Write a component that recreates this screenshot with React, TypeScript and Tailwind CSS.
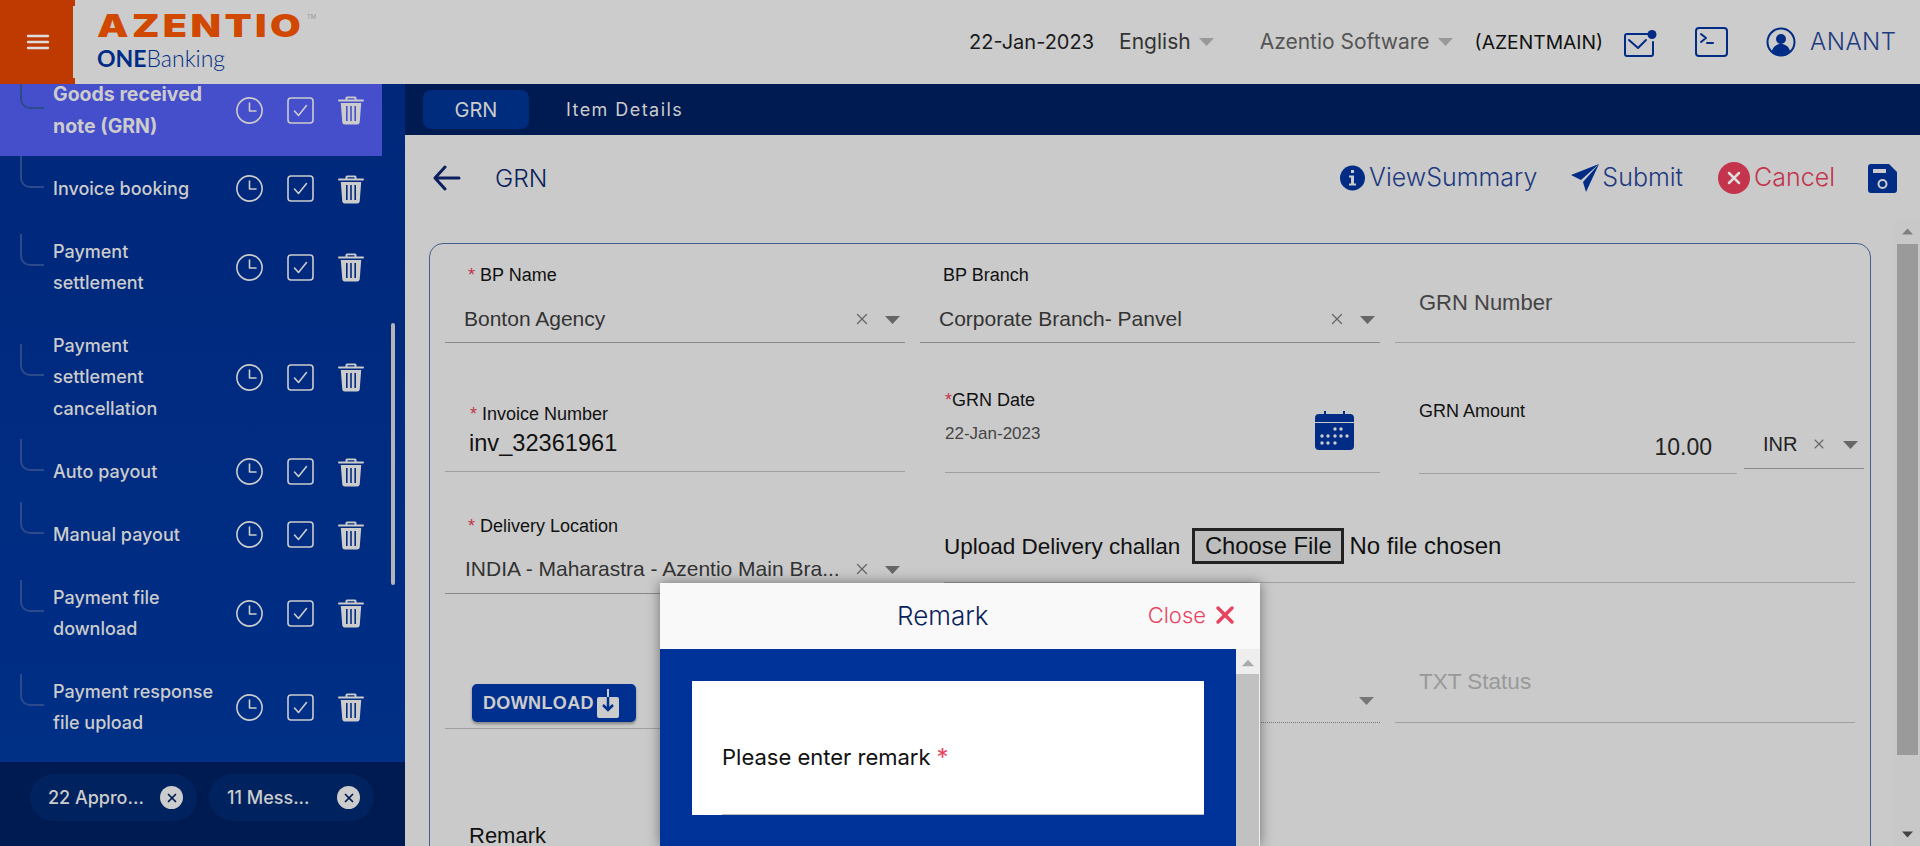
import { ReactNode } from "react";
import { X } from "lucide-react";

const menu = [
  { label: "Goods received note (GRN)", h: "h-[94px]", w: "w-[150px]", active: true },
  { label: "Invoice booking", h: "h-[63px]" },
  { label: "Payment settlement", h: "h-[94px]", w: "w-[150px]" },
  { label: "Payment settlement cancellation", h: "h-[126px]", w: "w-[150px]" },
  { label: "Auto payout", h: "h-[63px]" },
  { label: "Manual payout", h: "h-[63px]" },
  { label: "Payment file download", h: "h-[94px]", w: "w-[150px]" },
  { label: "Payment response file upload", h: "h-[94px]" },
];

function ClockIcon() {
  return (
    <svg width="27" height="27" viewBox="0 0 27 27" fill="none" stroke="#cccccc" strokeWidth="1.6" strokeLinecap="round" strokeLinejoin="round">
      <circle cx="13.5" cy="13.5" r="12.6" />
      <path d="M13.5 6v8h6.5" />
    </svg>
  );
}

function CheckIcon() {
  return (
    <svg width="27" height="27" viewBox="0 0 27 27" fill="none" stroke="#cccccc" strokeWidth="1.6" strokeLinecap="round" strokeLinejoin="round">
      <rect x="1" y="1" width="25" height="25" rx="3" />
      <path d="M7.5 14l4 4.5 8-10" />
    </svg>
  );
}

function TrashIcon() {
  return (
    <svg width="26" height="30" viewBox="0 0 26 30" fill="#cccccc">
      <path d="M9 1.500h8a1.500 1.500 0 0 1 1.500 1.500v1.500H25a1 1 0 0 1 0 2H1a1 1 0 0 1 0-2h6.500V3A1.500 1.500 0 0 1 9 1.500zM9.500 3.200v1.300h7V3.200z" />
      <path fillRule="evenodd" d="M2.800 8h20.400l-1.500 19.500A2.500 2.500 0 0 1 19.200 29.500H6.800a2.500 2.500 0 0 1-2.500-2L2.800 8zM8 11v15h1.600V11zM12.200 11v15h1.600V11zM16.400 11v15H18V11z" />
    </svg>
  );
}

function Caret({ className = "" }: { className?: string }) {
  return (
    <svg width="15" height="8" viewBox="0 0 15 8" className={className}>
      <path d="M0 0h15L7.500 8z" fill="currentColor" />
    </svg>
  );
}

function MenuRow({ label, h, w, active }: { label: string; h: string; w?: string; active?: boolean }) {
  return (
    <div className={`relative flex w-[382px] items-center pl-[53px] ${h} ${active ? "bg-[#464fcb]" : ""}`}>
      <span className="absolute bottom-1/2 left-[20px] h-[32px] w-[24px] rounded-bl-[10px] border-b-2 border-l-2 border-[#2c4a8c]" />
      <div className={`mr-auto shrink-0 pt-[2px] text-[#cccccc] ${active ? "text-[19.5px] font-bold leading-[32px]" : "text-[18px] font-medium leading-[31.5px]"} ${w ?? "w-[183px]"}`}>
        {label}
      </div>
      <div className="absolute left-[236px] top-[calc(50%+1px)] flex -translate-y-1/2 items-center gap-[24px]">
        <ClockIcon />
        <CheckIcon />
        <TrashIcon />
      </div>
    </div>
  );
}

function Chip({ text, className }: { text: string; className: string }) {
  return (
    <div className={`flex h-[47px] items-center rounded-full bg-[#00225f] pl-[18px] ${className}`}>
      <span className="text-[18px] font-medium text-[#cccccc]">{text}</span>
      <span className="ml-auto mr-[14px] flex h-[23px] w-[23px] items-center justify-center rounded-full bg-[#cccccc]">
        <X size={14} strokeWidth={3} className="text-[#001a52]" />
      </span>
    </div>
  );
}

function Label({ text, star, className = "" }: { text: string; star?: boolean; className?: string }) {
  return (
    <div className={`text-[18px] leading-[20px] text-[#111111] ${className}`}>
      {star && <span className="mr-[5px] text-[#c0354a]">*</span>}
      {text}
    </div>
  );
}

function SelectValue({ children }: { children: ReactNode }) {
  return (
    <div className="flex items-center text-[21px] leading-[28px] text-[#333333]">
      <span className="min-w-0 flex-1 truncate">{children}</span>
      <X size={18} strokeWidth={1.6} className="ml-[4px] mr-[14px] shrink-0 text-[#666666]" />
      <Caret className="mr-[5px] mt-[2px] shrink-0 text-[#666666]" />
    </div>
  );
}

export default function App() {
  return (
    <div className="relative flex h-[846px] w-[1920px] flex-col overflow-hidden bg-[#cacaca] font-['Inter',sans-serif]">
      <header className="flex h-[84px] shrink-0 items-center bg-[#cccccc]">
        <div className="flex h-full w-[75px] shrink-0 items-center justify-center bg-[#bf3a00]">
          <svg width="24" height="16" viewBox="0 0 24 16" stroke="#dddddd" strokeWidth="2.4" strokeLinecap="round">
            <path d="M2 2h20M2 8h20M2 14h20" />
          </svg>
        </div>
        <div className="-ml-[2px] flex h-[72px] w-[100px] shrink-0 flex-col bg-[#cccccc] pl-[24px] pt-[2px]">
          <div className="relative">
            <span className="inline-block origin-left scale-x-[1.28] text-[31px] font-black leading-[36px] tracking-[0.085em] text-[#d14800]">AZENTIO</span>
            <span className="absolute left-[210px] top-[4px] text-[6px] text-[#999999]">TM</span>
          </div>
          <div className="-mt-[1px] whitespace-nowrap text-[23px] leading-[30px] text-[#002c85] [font-family:'Lato',sans-serif]">
            <span className="font-bold">ONE</span>
            <span className="font-light">Banking</span>
          </div>
        </div>

        <span className="ml-[796px] text-[20px] text-[#1a1a1a]">22-Jan-2023</span>
        <span className="ml-[25px] text-[21px] text-[#333333]">English</span>
        <Caret className="ml-[8px] text-[#999999]" />
        <span className="ml-[46px] text-[21px] text-[#555555]">Azentio Software</span>
        <Caret className="ml-[8px] text-[#999999]" />
        <span className="ml-[22px] text-[19.3px] text-[#111111]">(AZENTMAIN)</span>
        <svg width="33" height="27" viewBox="0 0 33 27" fill="none" className="ml-[21px] mt-[3px]" stroke="#002c85" strokeWidth="2" strokeLinecap="round" strokeLinejoin="round">
          <path d="M25 4H3a2 2 0 0 0-2 2v18a2 2 0 0 0 2 2h24a2 2 0 0 0 2-2V12" />
          <path d="M5 10l9 8 8-8" />
          <circle cx="28" cy="4.500" r="4.500" fill="#002c85" stroke="none" />
        </svg>
        <svg width="33" height="30" viewBox="0 0 33 30" fill="none" className="ml-[38px]" stroke="#002c85" strokeWidth="2" strokeLinecap="round" strokeLinejoin="round">
          <rect x="1" y="1" width="31" height="28" rx="3" />
          <path d="M6 7l5 4-5 4M12 16h6" />
        </svg>
        <svg width="30" height="30" viewBox="0 0 30 30" className="ml-[38px]">
          <circle cx="15" cy="15" r="13.500" fill="none" stroke="#002c85" strokeWidth="2" />
          <circle cx="15" cy="12" r="5" fill="#002c85" />
          <path d="M6 24c1.500-5 5-7 9-7s7.500 2 9 7c-2.500 2.500-5.500 4-9 4s-6.500-1.500-9-4z" fill="#002c85" />
        </svg>
        <span className="ml-[14px] text-[24px] font-light tracking-[0.02em] text-[#1e3a80]">ANANT</span>
      </header>

      <div className="flex min-h-0 flex-1">
        <aside className="relative flex w-[405px] shrink-0 flex-col overflow-hidden bg-gradient-to-b from-[#00277a] to-[#003088]">
          <div className="-mt-[22px] min-h-0 flex-1">
            {menu.map((m) => (
              <MenuRow key={m.label} {...m} />
            ))}
          </div>
          <span className="absolute left-[391px] top-[239px] h-[262px] w-[4px] rounded-full bg-[#b4b4b4]" />
          <div className="flex h-[84px] shrink-0 gap-[12px] bg-[#001a52] px-[30px] pt-[12px]">
            <Chip text="22 Appro..." className="w-[167px]" />
            <Chip text="11 Mess..." className="w-[165px]" />
          </div>
        </aside>

        <main className="flex min-w-0 flex-1 flex-col">
          <nav className="flex h-[51px] shrink-0 items-center bg-[#001a52] pl-[18px] text-[18px] text-[#cccccc]">
            <span className="flex h-[39px] w-[106px] items-center justify-center rounded-[8px] bg-[#002c7d] text-[20px]">GRN</span>
            <span className="ml-[37px] tracking-[0.08em]">Item Details</span>
          </nav>

          <div className="relative min-h-0 flex-1">
            <div className="flex h-[108px] items-center pb-[22px] pl-[28px] pr-[23px]">
              <svg width="28" height="26" viewBox="0 0 28 26" fill="none" stroke="#0a1f5c" strokeWidth="3" strokeLinecap="round" strokeLinejoin="round">
                <path d="M26 13H2M12 2L2 13l10 11" />
              </svg>
              <span className="ml-[34px] text-[24.5px] font-light text-[#0a1f5c]">GRN</span>

              <svg width="25" height="26" viewBox="0 0 25 26" className="ml-auto">
                <circle cx="12.500" cy="13" r="12.500" fill="#002c85" />
                <rect x="11" y="5" width="3" height="3" fill="#cccccc" />
                <path d="M9 10.500h5v8h2v2H9v-2h2v-6H9z" fill="#cccccc" />
              </svg>
              <span className="ml-[4px] text-[25px] font-light text-[#1e3a80]">ViewSummary</span>
              <svg width="29" height="30" viewBox="0 0 29 30" className="ml-[34px]">
                <path d="M28 1L0 12l10 5L28 1zM28 1L12 19l3 10L28 1z" fill="#002c85" />
              </svg>
              <span className="ml-[2px] text-[25px] font-light text-[#1e3a80]">Submit</span>
              <span className="ml-[35px] flex h-[32px] w-[32px] items-center justify-center rounded-full bg-[#c4344c]">
                <X size={20} strokeWidth={3} className="text-[#dddddd]" />
              </span>
              <span className="ml-[4px] text-[25px] font-light text-[#c4344c]">Cancel</span>
              <svg width="29" height="29" viewBox="0 0 29 29" className="ml-[33px]">
                <path d="M3 0h18l8 8v18a3 3 0 0 1-3 3H3a3 3 0 0 1-3-3V3a3 3 0 0 1 3-3z" fill="#002c85" />
                <rect x="5" y="5" width="13" height="4" fill="#cccccc" />
                <circle cx="14.500" cy="20" r="4" fill="none" stroke="#cccccc" strokeWidth="2" />
              </svg>
            </div>

            <section className="ml-[24px] mr-[49px] h-[700px] rounded-[14px] border border-[#43608f] font-['Liberation_Sans',sans-serif]">
              <div className="grid grid-cols-3 gap-x-[15px] px-[15px]">
                <div className="flex h-[99px] flex-col justify-end border-b border-[#8a8a8a] pb-[9px]">
                  <Label text="BP Name" star className="mb-[20px] ml-[23px]" />
                  <div className="pl-[19px]"><SelectValue>Bonton Agency</SelectValue></div>
                </div>
                <div className="flex h-[99px] flex-col justify-end border-b border-[#8a8a8a] pb-[9px]">
                  <Label text="BP Branch" className="mb-[20px] ml-[23px]" />
                  <div className="pl-[19px]"><SelectValue>Corporate Branch- Panvel</SelectValue></div>
                </div>
                <div className="flex h-[99px] flex-col justify-end border-b border-[#a0a0a0] pb-[24px]">
                  <div className="pl-[24px] text-[22px] leading-[30px] text-[#444444]">GRN Number</div>
                </div>

                <div className="flex h-[129px] flex-col justify-end border-b border-[#a0a0a0] pb-[13px]">
                  <Label text="Invoice Number" star className="ml-[25px] text-[17px]" />
                  <div className="ml-[24px] mt-[4px] text-[23.6px] leading-[30px] text-[#111111]">inv_32361961</div>
                </div>
                <div className="ml-[25px] flex h-[130px] flex-col justify-end border-b border-[#a0a0a0] pb-[26px]">
                  <div className="relative">
                    <Label text="GRN Date" className="mb-[12px] before:text-[#c0354a] before:content-['*']" />
                    <div className="text-[17px] leading-[24px] text-[#444444]">22-Jan-2023</div>
                    <svg width="39" height="40" viewBox="0 0 39 40" className="absolute bottom-[-4px] right-[26px]">
                      <path d="M4 4h5V1h2v3h17V1h2v3h5a4 4 0 0 1 4 4v4H0V8a4 4 0 0 1 4-4zM0 13h39v23a4 4 0 0 1-4 4H4a4 4 0 0 1-4-4z" fill="#002c85" />
                      <g fill="#cccccc">
                        <circle cx="20" cy="19" r="1.700" /><circle cx="26" cy="19" r="1.700" />
                        <circle cx="7" cy="26" r="1.700" /><circle cx="13" cy="26" r="1.700" /><circle cx="20" cy="26" r="1.700" /><circle cx="26" cy="26" r="1.700" /><circle cx="32" cy="26" r="1.700" />
                        <circle cx="7" cy="33" r="1.700" /><circle cx="13" cy="33" r="1.700" /><circle cx="20" cy="33" r="1.700" />
                      </g>
                    </svg>
                  </div>
                </div>
                <div className="-mr-[9px] ml-[24px] flex h-[131px] items-end">
                  <div className="flex h-full w-[318px] shrink-0 flex-col justify-end border-b border-[#a0a0a0] pb-[12px]">
                    <Label text="GRN Amount" className="mb-[12px]" />
                    <div className="pr-[25px] text-right text-[23px] leading-[28px] text-[#222222]">10.00</div>
                  </div>
                  <div className="mb-[5px] ml-[7px] flex w-[120px] items-center border-b border-[#8a8a8a] pb-[9px] pl-[19px] text-[20px] text-[#222222]">
                    <span className="flex-1">INR</span>
                    <X size={16} strokeWidth={1.6} className="mr-[16px] text-[#666666]" />
                    <Caret className="mr-[6px] mt-[2px] text-[#666666]" />
                  </div>
                </div>

                <div className="flex h-[120px] flex-col justify-end border-b border-[#8a8a8a] pb-[10px]">
                  <Label text="Delivery Location" star className="mb-[19px] ml-[23px] text-[17.5px]" />
                  <div className="pl-[20px]"><SelectValue>INDIA - Maharastra - Azentio Main Bra...</SelectValue></div>
                </div>
                <div className="col-span-2 mb-[11px] ml-[24px] flex h-[109px] items-end border-b border-[#a0a0a0] pb-[18px] text-[24px] text-[#111111]">
                  <span className="text-[22.5px]">Upload Delivery challan</span>
                  <span className="ml-[12px] flex h-[36px] w-[152px] items-center justify-center border-[3px] border-[#222222] bg-[#bdbdbd] text-[23.8px]">Choose File</span>
                  <span className="ml-[5px]">No file chosen</span>
                </div>

                <div className="flex h-[135px] items-end border-b border-[#a0a0a0] pb-[6px] pl-[27px]">
                  <span className="flex h-[38px] w-[164px] items-center gap-[3px] rounded-[5px] bg-[#00308f] pl-[11px] text-[18px] font-bold tracking-[0.02em] text-[#cccccc] shadow-[0_2px_3px_rgba(0,0,0,0.35)]">
                    DOWNLOAD
                    <svg width="22" height="29" viewBox="0 0 22 29">
                      <rect x="0" y="8" width="22" height="21" rx="2" fill="#cccccc" />
                      <path d="M11 0v8" stroke="#cccccc" strokeWidth="2" />
                      <path d="M11 8v13M6 16l5 5 5-5" fill="none" stroke="#00308f" strokeWidth="2.500" />
                    </svg>
                  </span>
                </div>
                <div className="mb-[6px] flex h-[129px] items-end justify-end border-b border-dotted border-[#777777] pb-[17px] pr-[6px]">
                  <Caret className="text-[#777777]" />
                </div>
                <div className="mb-[6px] flex h-[129px] items-end border-b border-[#a0a0a0] pb-[25px] pl-[24px] text-[22.5px] leading-[30px] text-[#999999]">
                  TXT Status
                </div>

                <div className="col-span-3 mt-[97px] pl-[24px] text-[22px] leading-[20px] text-[#111111]">Remark</div>
              </div>
            </section>

            <div className="absolute bottom-0 right-0 top-[84px] w-[25px] bg-[#c8c8c8]">
              <Caret className="absolute left-[7px] top-[9px] h-[7px] w-[11px] rotate-180 text-[#808080]" />
              <div className="absolute left-[2px] top-[25px] h-[511px] w-[21px] bg-[#9a9a9a]" />
              <Caret className="absolute bottom-[8px] left-[7px] h-[7px] w-[11px] text-[#444444]" />
            </div>
          </div>
        </main>
      </div>

      <div className="absolute left-[660px] top-[583px] w-[600px] shadow-[0_0_12px_rgba(0,0,0,0.45)]">
        <div className="flex h-[66px] items-center justify-between bg-[#f9f9f9] pb-[2px] pl-[237px] pr-[21px]">
          <span className="text-[26px] font-light text-[#0a1f5c]">Remark</span>
          <span className="flex items-center gap-[5px] text-[22px] font-light text-[#e8435f]">
            Close
            <X size={28} strokeWidth={3} />
          </span>
        </div>
        <div className="flex h-[197px]">
          <div className="min-w-0 flex-1 bg-[#003399] pl-[32px] pr-[32px] pt-[32px]">
            <div className="h-[134px] bg-white pl-[30px]">
              <div className="flex h-full items-center border-b border-[#bbbbbb] pt-[20px] text-[22px] text-[#111111]">
                Please enter remark
                <span className="ml-[6px] text-[24px] text-[#e8435f]">*</span>
              </div>
            </div>
          </div>
          <div className="relative w-[24px] shrink-0 bg-[#eeeeee]">
            <Caret className="absolute left-[6px] top-[10px] h-[8px] w-[12px] rotate-180 text-[#aaaaaa]" />
            <div className="absolute bottom-0 left-0 top-[25px] w-[23px] bg-[#c1c1c1]" />
          </div>
        </div>
      </div>
    </div>
  );
}
